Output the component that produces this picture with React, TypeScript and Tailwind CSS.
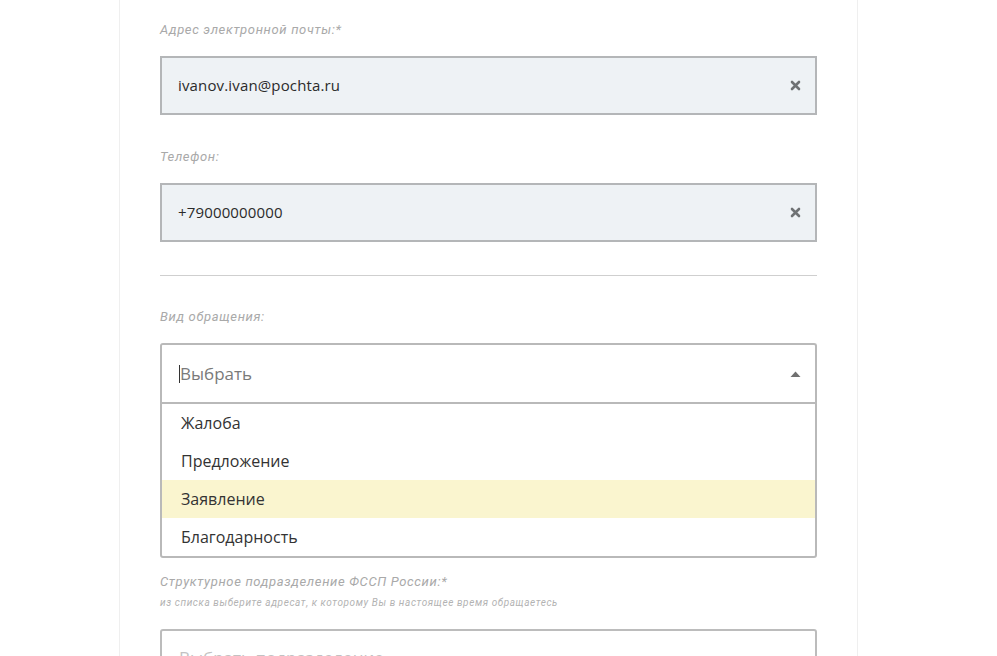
import React from 'react'

const labelFont = { fontFamily: 'Roboto, "DejaVu Sans", sans-serif' }
const bodyFont = { fontFamily: '"Open Sans", "Noto Sans", sans-serif' }

function ClearIcon() {
  return (
    <svg width="11" height="11" viewBox="0 0 11 11" className="shrink-0">
      <path d="M2 2 L9 9 M9 2 L2 9" stroke="#6f7274" strokeWidth="2.6" strokeLinecap="round" />
    </svg>
  )
}

function Label({ children }: { children: React.ReactNode }) {
  return (
    <div className="h-5 text-[13px] leading-5 italic text-[#a9a9a9] tracking-[0.65px]" style={labelFont}>
      {children}
    </div>
  )
}

function FilledInput({ value }: { value: string }) {
  return (
    <div className="flex h-[59px] items-center justify-between border-2 border-[#b4b6b8] bg-[#eef2f5] pl-[16px] pr-[14px]">
      <span className="text-[15px] text-[#2b2b2b] tracking-[0.15px]" style={bodyFont}>
        {value}
      </span>
      <ClearIcon />
    </div>
  )
}

const options = ['Жалоба', 'Предложение', 'Заявление', 'Благодарность']

export default function App() {
  return (
    <div className="min-h-[656px] bg-white">
      <div className="ml-[119px] w-[739px] min-h-[656px] border-x border-[#efefef] px-[40px] pt-[20px]">
        <Label>Адрес электронной почты:*</Label>
        <div className="mt-[16px]">
          <FilledInput value="ivanov.ivan@pochta.ru" />
        </div>

        <div className="mt-[32px]">
          <Label>Телефон:</Label>
        </div>
        <div className="mt-[16px]">
          <FilledInput value="+79000000000" />
        </div>

        <div className="mt-[33px] h-px bg-[#cfcfcf]" />

        <div className="mt-[31px]">
          <Label>Вид обращения:</Label>
        </div>

        {/* select, opened */}
        <div className="mt-[16px] flex h-[59px] items-center justify-between rounded-t-[3px] border-2 border-b-0 border-[#b9b9b9] bg-white pl-[17px] pr-[14px]">
          <div className="flex items-center">
            <span className="h-[18px] w-px bg-[#333]" />
            <span className="text-[17px] text-[#7a7a7a]" style={bodyFont}>
              Выбрать
            </span>
          </div>
          <svg width="11" height="6" viewBox="0 0 11 6">
            <path d="M0.5 6 L5.5 0.5 L10.5 6 Z" fill="#707070" />
          </svg>
        </div>
        <ul className="rounded-b-[3px] border-2 border-[#b9b9b9] bg-white">
          {options.map((opt) => (
            <li
              key={opt}
              className={`flex h-[38px] items-center pl-[19px] text-[16px] text-[#333] ${
                opt === 'Заявление' ? 'bg-[#faf5cf]' : ''
              }`}
              style={bodyFont}
            >
              {opt}
            </li>
          ))}
        </ul>

        <div className="mt-[14px]">
          <Label>Структурное подразделение ФССП России:*</Label>
        </div>
        <div
          className="mt-[4px] text-[10px] leading-[14px] italic text-[#b3b3b3] tracking-[0.6px]"
          style={labelFont}
        >
          из списка выберите адресат, к которому Вы в настоящее время обращаетесь
        </div>

        <div className="mt-[19px] flex h-[59px] items-start rounded-[3px] border-2 border-[#bcbcbc] bg-white pl-[17px] pt-[14px]">
          <span className="text-[17px] text-[#9a9a9a] opacity-60" style={bodyFont}>
            Выбрать подразделение
          </span>
        </div>
      </div>
    </div>
  )
}
